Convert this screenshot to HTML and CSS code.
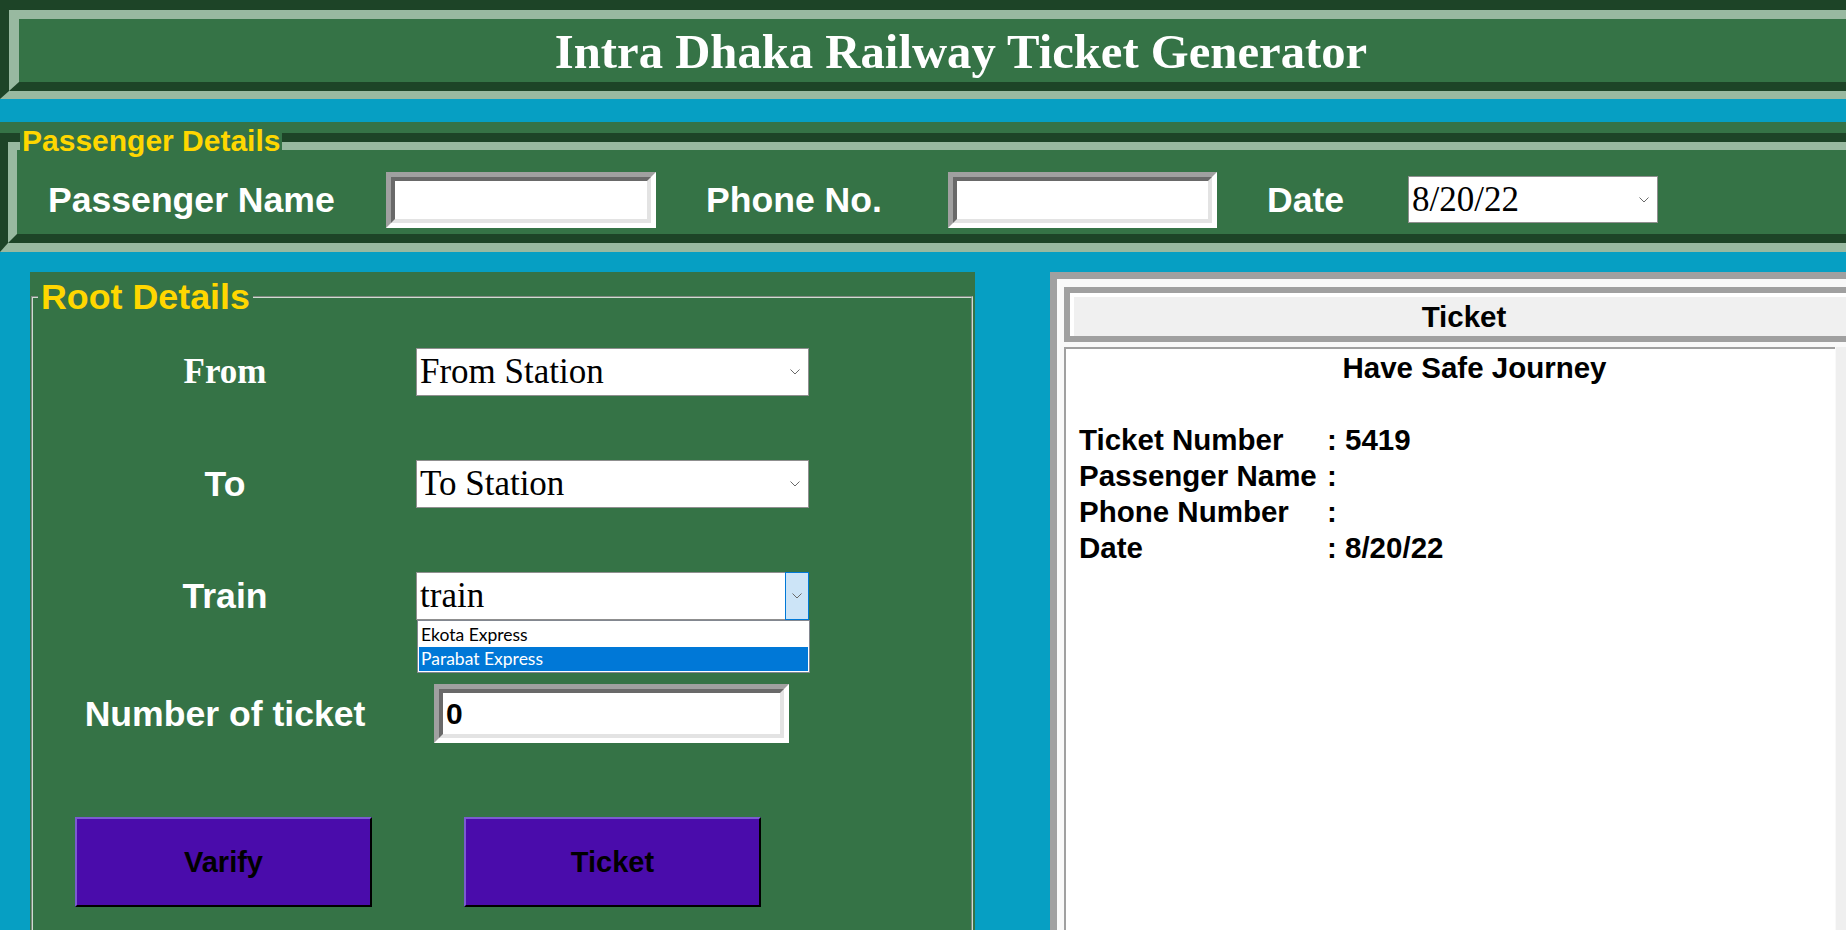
FILE: index.html
```html
<!DOCTYPE html>
<html lang="en">
<head>
<meta charset="utf-8">
<title>Intra Dhaka Railway Ticket Generator</title>
<link rel="stylesheet" href="styles.css">
</head>
<body>
<div class="app">
  <header class="title-bar">
    <div class="title-in">
      <h1 class="title">Intra Dhaka Railway Ticket Generator</h1>
    </div>
  </header>

  <section class="passenger">
    <span class="frame-label">Passenger Details</span>
    <div class="p-groove">
      <div class="p-groove-in">
        <span class="p-label pl-name">Passenger Name</span>
        <div class="entry e-name"><div class="entry-in"></div></div>
        <span class="p-label pl-phone">Phone No.</span>
        <div class="entry e-phone"><div class="entry-in"></div></div>
        <span class="p-label pl-date">Date</span>
        <div class="combo c-date">
          <span class="combo-text">8/20/22</span>
          <svg class="chev" width="10" height="6" viewBox="0 0 10 6"><polyline points="0.5,0.5 5,5 9.5,0.5" fill="none" stroke="#6a6a6a" stroke-width="1"/></svg>
        </div>
      </div>
    </div>
  </section>

  <main class="main">
    <section class="root">
      <fieldset class="root-set">
        <legend class="root-legend">Root Details</legend>
        <div class="form-grid">
          <span class="f-label serif">From</span>
          <div class="combo">
            <span class="combo-text">From Station</span>
            <svg class="chev" width="10" height="6" viewBox="0 0 10 6"><polyline points="0.5,0.5 5,5 9.5,0.5" fill="none" stroke="#6a6a6a" stroke-width="1"/></svg>
          </div>

          <span class="f-label">To</span>
          <div class="combo">
            <span class="combo-text">To Station</span>
            <svg class="chev" width="10" height="6" viewBox="0 0 10 6"><polyline points="0.5,0.5 5,5 9.5,0.5" fill="none" stroke="#6a6a6a" stroke-width="1"/></svg>
          </div>

          <span class="f-label">Train</span>
          <div class="combo combo-open">
            <span class="combo-text">train</span>
            <span class="cbtn">
              <svg width="10" height="6" viewBox="0 0 10 6"><polyline points="0.5,0.5 5,5 9.5,0.5" fill="none" stroke="#6a6a6a" stroke-width="1"/></svg>
            </span>
            <ul class="dropdown">
              <li class="opt">Ekota Express</li>
              <li class="opt sel">Parabat Express</li>
            </ul>
          </div>

          <span class="f-label">Number of ticket</span>
          <div class="entry e-num"><div class="entry-in"><span class="num-val">0</span></div></div>
        </div>
        <div class="buttons">
          <button class="btn" type="button">Varify</button>
          <button class="btn" type="button">Ticket</button>
        </div>
      </fieldset>
    </section>

    <section class="ticket">
      <div class="t-head">Ticket</div>
      <div class="t-body">
        <div class="t-text">
          <div class="t-greet">Have Safe Journey</div>
          <div class="t-blank"></div>
          <div class="t-row"><span>Ticket Number</span><span>: 5419</span></div>
          <div class="t-row"><span>Passenger Name</span><span>:</span></div>
          <div class="t-row"><span>Phone Number</span><span>:</span></div>
          <div class="t-row"><span>Date</span><span>: 8/20/22</span></div>
        </div>
        <div class="t-side"></div>
      </div>
    </section>
  </main>
</div>
</body>
</html>
```

FILE: styles.css
```css
* { box-sizing: border-box; }

html, body {
  margin: 0;
  padding: 0;
  overflow: hidden;
}

body {
  font-family: "Liberation Sans", Arial, sans-serif;
  background: #069fc3;
}

.app {
  width: 1922px;
  height: 930px;
  background: #069fc3;
  overflow: hidden;
}

/* ---------- Title bar ---------- */
.title-bar {
  height: 99px;
  border-style: solid;
  border-width: 10px 9px 8px 9px;
  border-color: #1d4427 #98b9a0 #98b9a0 #1d4427;
}

.title-in {
  height: 100%;
  border-style: solid;
  border-width: 9px 10px 9px 10px;
  border-color: #98b9a0 #1d4427 #1d4427 #98b9a0;
  background: #357346;
}

.title {
  margin: 0;
  padding-top: 3px;
  text-align: center;
  font-family: "Liberation Serif", "Times New Roman", serif;
  font-weight: bold;
  font-size: 48.7px;
  line-height: 60px;
  color: #ffffff;
}

/* ---------- Passenger details ---------- */
.passenger {
  position: relative;
  margin-top: 23px;
  height: 129px;
  padding-top: 11px;
  background: #357346;
}

.frame-label {
  position: absolute;
  left: 20px;
  top: 2px;
  padding: 0 2px;
  background: #357346;
  color: #ffd700;
  font-weight: bold;
  font-size: 30px;
  line-height: 34px;
}

.p-groove {
  border-style: solid;
  border-width: 9px 8px 9px 8px;
  border-color: #1d4427 #98b9a0 #98b9a0 #1d4427;
}

.p-groove-in {
  height: 101px;
  display: flex;
  align-items: center;
  padding-top: 15px;
  border-style: solid;
  border-width: 8px 9px 9px 9px;
  border-color: #98b9a0 #1d4427 #1d4427 #98b9a0;
  background: #357346;
}

.p-label {
  color: #ffffff;
  font-weight: bold;
  font-size: 35.6px;
  line-height: 40px;
  white-space: nowrap;
}

.pl-name { margin-left: 31px; width: 338px; }
.pl-phone { margin-left: 50px; width: 242px; }
.pl-date { margin-left: 50px; width: 141px; }

/* sunken entry */
.entry {
  height: 56px;
  border-style: solid;
  border-width: 5px;
  border-color: #a0a0a0 #ffffff #ffffff #a0a0a0;
  background: #ffffff;
}

.entry-in {
  height: 100%;
  border-style: solid;
  border-width: 4px;
  border-color: #696969 #e3e3e3 #e3e3e3 #696969;
  background: #ffffff;
  display: flex;
  align-items: center;
}

.e-name { width: 270px; }
.e-phone { width: 269px; }

/* combobox */
.combo {
  position: relative;
  height: 48px;
  display: flex;
  align-items: center;
  padding-left: 3px;
  border: 1px solid #8f8f8f;
  background: #ffffff;
  font-family: "Liberation Serif", "Times New Roman", serif;
  font-size: 35px;
  color: #000000;
}

.combo-text {
  flex: 1;
  line-height: 40px;
  white-space: nowrap;
}

.chev {
  flex: none;
  margin-right: 8px;
}

.c-date {
  width: 250px;
  height: 47px;
}

.combo-open {
  border-right: 0;
}

.cbtn {
  align-self: stretch;
  margin: -1px 0;
  width: 24px;
  display: flex;
  align-items: center;
  justify-content: center;
  border: 1px solid #0078d7;
  background: #cce4f7;
}

.dropdown {
  position: absolute;
  top: calc(100% + 1px);
  left: 0;
  width: 393px;
  height: 53px;
  margin: 0;
  padding: 1px;
  list-style: none;
  border: 1px solid #828790;
  background: #ffffff;
  font-family: Lato, "Open Sans", sans-serif;
  font-size: 17.5px;
  color: #000000;
  z-index: 2;
}

.opt {
  height: 25px;
  line-height: 25px;
  padding-left: 2px;
  white-space: nowrap;
}

.opt.sel {
  height: 24px;
  line-height: 23px;
  background: #0078d7;
  color: #ffffff;
}

/* ---------- Main area ---------- */
.main {
  display: flex;
  margin-top: 21px;
  height: 658px;
}

.root {
  flex: none;
  width: 945px;
  margin-left: 30px;
  padding-top: 5px;
  background: #357346;
  overflow: hidden;
}

.root-set {
  margin: 0 2px 0 1px;
  padding: 0;
  min-width: 0;
  height: 720px;
  border: 2px groove #cfdcd1;
}

.root-legend {
  margin-left: 5px;
  padding: 0 3px;
  color: #ffd700;
  font-weight: bold;
  font-size: 35.8px;
  line-height: 40px;
}

.form-grid {
  display: grid;
  grid-template-columns: 282px 393px;
  grid-template-rows: 48px 48px 48px 59px;
  column-gap: 50px;
  row-gap: 64px;
  padding-top: 31px;
  padding-left: 51px;
}

.f-label {
  align-self: center;
  text-align: center;
  color: #ffffff;
  font-weight: bold;
  font-size: 35.6px;
  line-height: 40px;
  white-space: nowrap;
}

.f-label.serif {
  font-family: "Liberation Serif", "Times New Roman", serif;
  font-size: 35px;
}

.e-num {
  width: 355px;
  height: 59px;
  margin-left: 18px;
}

.num-val {
  padding-left: 3px;
  font-weight: bold;
  font-size: 30px;
  line-height: 34px;
  color: #000000;
}

.buttons {
  display: flex;
  gap: 92px;
  margin-top: 74px;
  padding-left: 42px;
}

.btn {
  width: 297px;
  height: 90px;
  padding: 0;
  border-style: solid;
  border-width: 2px;
  border-color: #7b5bd0 #000000 #000000 #7b5bd0;
  background: #4a0cab;
  color: #000000;
  font-family: "Liberation Sans", Arial, sans-serif;
  font-weight: bold;
  font-size: 29px;
}

/* ---------- Ticket panel ---------- */
.ticket {
  flex: none;
  width: 828px;
  margin-left: 75px;
  padding: 8px 7px 0 7px;
  border-top: 7px solid #a0a0a0;
  border-left: 7px solid #a0a0a0;
  border-right: 7px solid #a0a0a0;
  background: #f9f9f9;
}

.t-head {
  height: 55px;
  padding-top: 4px;
  border: 6px solid #a0a0a0;
  box-shadow: inset 4px 4px 0 #ffffff;
  background: #f0f0f0;
  text-align: center;
  font-weight: bold;
  font-size: 29.5px;
  line-height: 39px;
  color: #000000;
}

.t-body {
  display: flex;
  margin-top: 5px;
  height: 600px;
}

.t-text {
  width: 771px;
  padding-top: 1px;
  border-top: 2px solid #a0a0a0;
  border-left: 2px solid #a0a0a0;
  background: #ffffff;
  font-weight: bold;
  font-size: 29.5px;
  line-height: 36px;
  color: #000000;
}

.t-side {
  flex: 1;
  margin-left: 1px;
  background: #efefef;
}

.t-greet {
  padding-left: 48px;
  text-align: center;
  white-space: nowrap;
}

.t-blank {
  height: 36px;
}

.t-row {
  display: grid;
  grid-template-columns: 248px auto;
  padding-left: 13px;
  white-space: nowrap;
}
```
